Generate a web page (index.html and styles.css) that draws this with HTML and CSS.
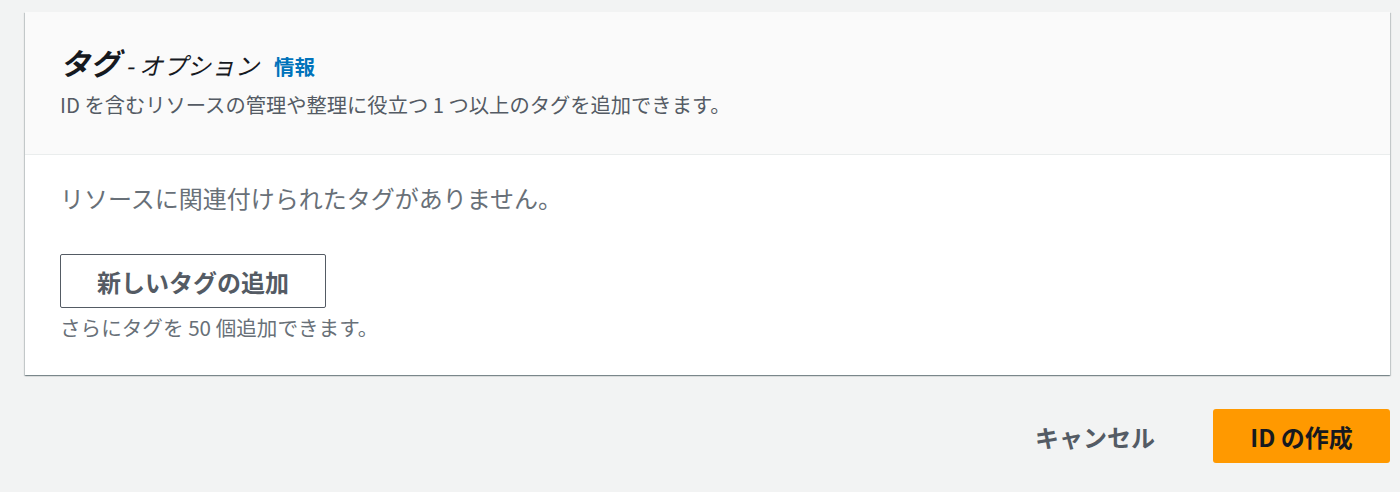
FILE: index.html
```html
<!DOCTYPE html>
<html lang="ja">
<head>
<meta charset="utf-8">
<link rel="stylesheet" href="styles.css">
</head>
<body>
<div class="page">
  <section class="card">
    <header class="card-header">
      <h2 class="title"><span class="title-main">タグ</span><span class="title-sub"> - オプション</span><a class="info" href="#">情報</a></h2>
      <p class="desc">ID を含むリソースの管理や整理に役立つ 1 つ以上のタグを追加できます。</p>
    </header>
    <div class="card-body">
      <p class="empty">リソースに関連付けられたタグがありません。</p>
      <button class="btn-normal" type="button">新しいタグの追加</button>
      <p class="hint">さらにタグを 50 個追加できます。</p>
    </div>
  </section>
  <div class="actions">
    <button class="btn-link" type="button">キャンセル</button>
    <button class="btn-primary" type="button">ID の作成</button>
  </div>
</div>
</body>
</html>
```

FILE: styles.css
```css
* { box-sizing: border-box; }
html, body { margin: 0; padding: 0; }
body {
  background: #f2f3f3;
  font-family: "Noto Sans CJK JP", "Noto Sans", sans-serif;
  color: #16191f;
  width: 1400px;
  height: 492px;
  overflow: hidden;
}
.page {
  padding: 12px 10px 0 25px;
}
.card {
  background: #fff;
  width: 1365px;
  box-shadow: 0 1px 1px 0 rgba(0,28,36,.3), 1px 1px 1px 0 rgba(0,28,36,.15), -1px 1px 1px 0 rgba(0,28,36,.15);
}
.card-header {
  background: #fafafa;
  border-bottom: 1px solid #eaeded;
  height: 143px;
  padding: 32px 35px 0 35px;
}
.title {
  margin: 0;
  display: flex;
  align-items: baseline;
  line-height: 36px;
  font-weight: 700;
}
.title-main {
  font-size: 30px;
  font-style: italic;
  font-weight: 700;
}
.title-sub {
  font-size: 24px;
  font-style: italic;
  font-weight: 400;
  white-space: pre;
  margin-right: 15px;
}
.info {
  font-size: 20.5px;
  font-weight: 700;
  color: #0073bb;
  text-decoration: none;
}
.desc {
  margin: 6px 0 0;
  font-size: 20.3px;
  line-height: 28px;
  color: #545b64;
}
.card-body {
  padding: 27px 35px 35px 35px;
}
.empty {
  margin: 0;
  font-size: 24px;
  line-height: 32px;
  color: #687078;
}
.btn-normal {
  display: block;
  margin-top: 40px;
  width: 266px;
  height: 54px;
  background: #fff;
  border: 1px solid #545b64;
  border-radius: 2px;
  font-family: inherit;
  font-size: 24px;
  font-weight: 700;
  color: #545b64;
  padding: 0;
}
.hint {
  margin: 6px 0 0;
  font-size: 20.6px;
  line-height: 26px;
  color: #687078;
}
.actions {
  display: flex;
  justify-content: flex-end;
  align-items: center;
  gap: 38px;
  margin-top: 34px;
}
.btn-link {
  background: none;
  border: none;
  font-family: inherit;
  font-size: 24px;
  font-weight: 700;
  color: #545b64;
  padding: 0 20px;
}
.btn-primary {
  width: 177px;
  height: 54px;
  background: #ff9900;
  border: none;
  border-radius: 3px;
  font-family: inherit;
  font-size: 24px;
  font-weight: 700;
  color: #16191f;
  padding: 0;
}
```
